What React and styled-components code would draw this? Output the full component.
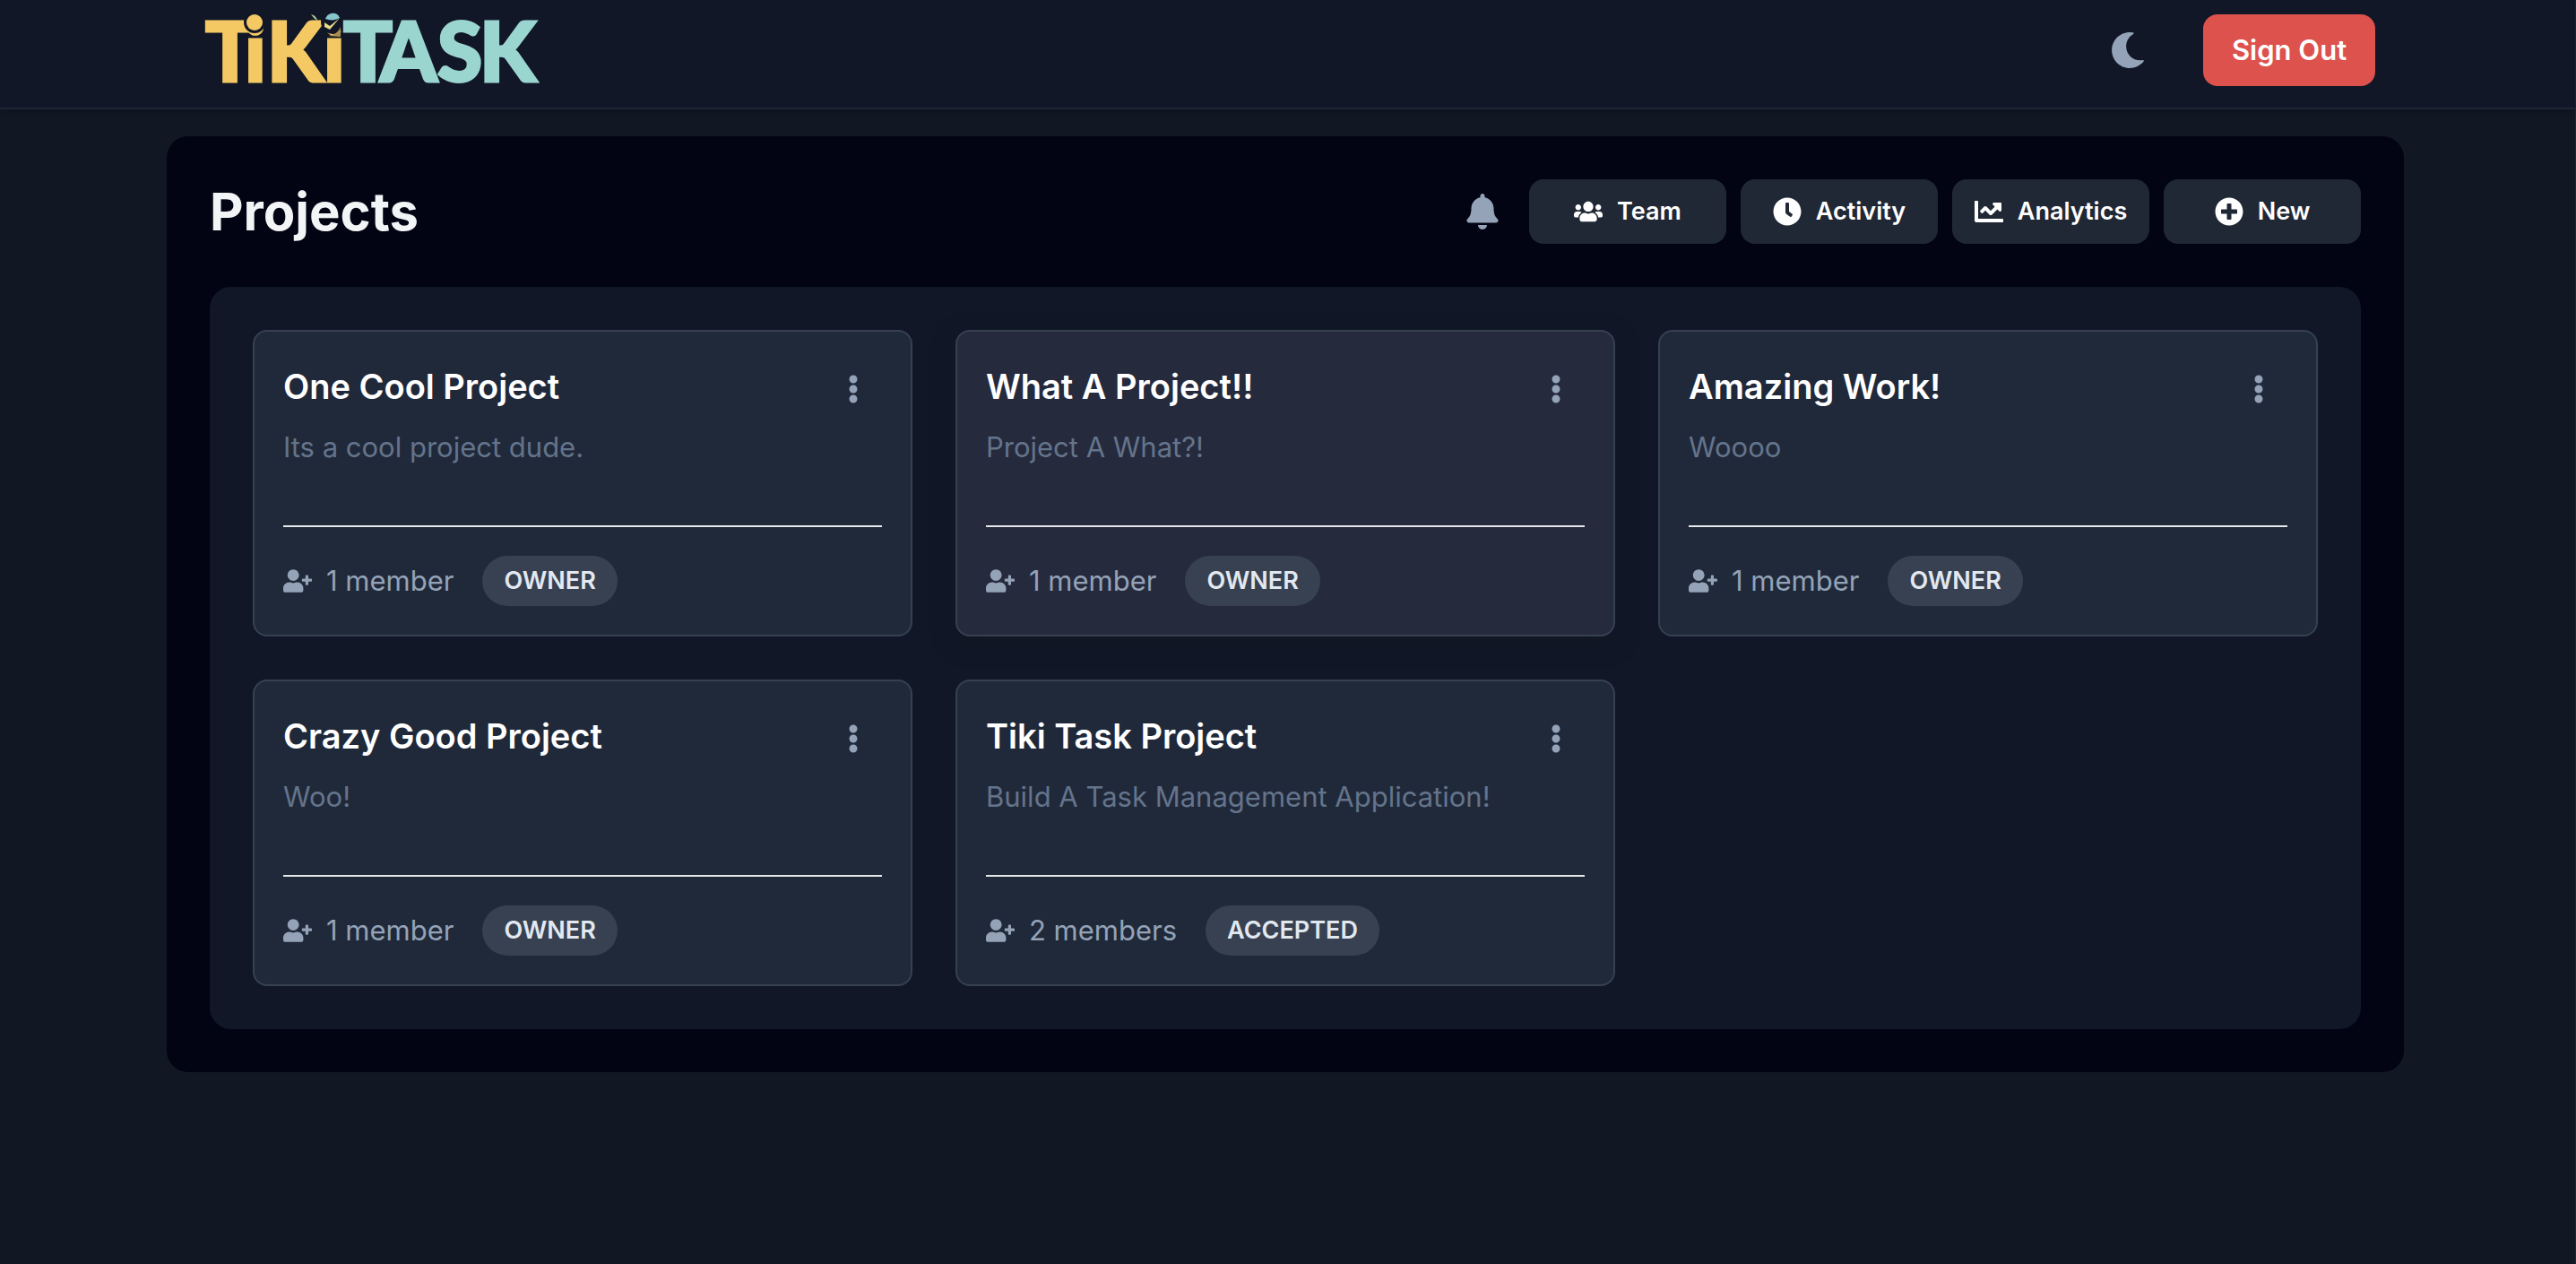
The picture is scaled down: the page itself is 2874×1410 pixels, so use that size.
import React from 'react';
import styled, { createGlobalStyle } from 'styled-components';
import {
  FaBell,
  FaChartLine,
  FaClock,
  FaEllipsisV,
  FaMoon,
  FaPlusCircle,
  FaUserPlus,
  FaUsers,
} from 'react-icons/fa';

const GlobalStyle = createGlobalStyle`
  *, *::before, *::after { box-sizing: border-box; }
  body {
    margin: 0;
    background: #111824;
    color: #ffffff;
    font-family: Inter, "Liberation Sans", sans-serif;
    font-size: 31px;
    line-height: 48px;
  }
  button { font: inherit; color: inherit; border: 0; cursor: pointer; }
  h1, h2, p, ul { margin: 0; padding: 0; }
  svg { display: block; flex-shrink: 0; }
`;

const Page = styled.div`
  min-height: 100vh;
  padding-right: 5px;
  border-right: 1px solid #1f2537;
`;

const Nav = styled.header`
  margin-right: -5px;
  padding-right: 5px;
  background: #111727;
  border-bottom: 2px solid #1f2537;
  box-shadow: 0 2px 8px rgba(0, 0, 0, 0.2);
`;

const Container = styled.div`
  max-width: 2560px;
  margin: 0 auto;
  padding: 0 ${(p) => p.$gutter}px;
`;

const NavRow = styled.div`
  display: flex;
  align-items: flex-start;
  justify-content: space-between;
`;

const LogoLink = styled.a`
  display: block;
  color: inherit;
  text-decoration: none;
`;

const NavActions = styled.div`
  display: flex;
  align-items: center;
  gap: 48px;
  padding-top: 16px;
`;

const IconButton = styled.button`
  display: flex;
  padding: 16px;
  background: none;
  color: #94a3b8;
  font-size: ${(p) => p.$size}px;
`;

const SignOutButton = styled.button`
  min-width: 192px;
  height: 80px;
  border-radius: 16px;
  background: #dd524c;
  font-weight: 600;
`;

const Main = styled.main`
  padding-top: 30px;
`;

const Panel = styled.section`
  padding: 48px;
  border-radius: 24px;
  background: #020413;
`;

const PanelHeader = styled.div`
  display: flex;
  align-items: center;
  justify-content: space-between;
  height: 72px;
  margin-bottom: 48px;
`;

const PageTitle = styled.h1`
  font-size: 58px;
  line-height: 72px;
  font-weight: 700;
  color: #f3f4f6;
`;

const Toolbar = styled.div`
  display: flex;
  align-items: center;
  gap: 16px;
`;

const ToolButton = styled.button`
  display: flex;
  align-items: center;
  justify-content: center;
  gap: 16px;
  width: 220px;
  height: 72px;
  padding: 0;
  border-radius: 16px;
  background: #202835;
  font-size: 27px;
  font-weight: 600;

  svg { font-size: 32px; }
`;

const ProjectGrid = styled.ul`
  display: grid;
  grid-template-columns: repeat(3, minmax(0, 1fr));
  gap: 48px;
  padding: 48px;
  border-radius: 24px;
  background: #111727;
  list-style: none;
`;

const Card = styled.li`
  padding: 32px;
  border: 2px solid #364150;
  border-radius: 16px;
  background: ${(p) => (p.$active ? '#262a3d' : '#20293a')};
  box-shadow: ${(p) => (p.$active ? '0 8px 24px rgba(17, 24, 32, 0.8)' : 'none')};
`;

const CardHeader = styled.div`
  display: flex;
  align-items: flex-start;
  justify-content: space-between;
`;

const CardTitle = styled.h2`
  font-size: 38px;
  line-height: 58px;
  font-weight: 600;
`;

const Description = styled.p`
  min-height: 80px;
  margin: 8px 0 32px;
  color: #64748b;
  line-height: 50px;
`;

const CardFooter = styled.div`
  display: flex;
  align-items: center;
  gap: 32px;
  padding-top: 32px;
  border-top: 2px solid #e5e7eb;
`;

const Members = styled.span`
  display: flex;
  align-items: center;
  gap: 16px;
  color: #94a3b8;

  svg { font-size: 32px; }
`;

const Badge = styled.span`
  padding: 8px 24px;
  border-radius: 28px;
  background: #374151;
  color: #e2e8f0;
  font-size: 27px;
  line-height: 40px;
  font-weight: 600;
`;

const LogoText = styled.text`
  font-family: Lato, "Liberation Sans", sans-serif;
  font-size: 91px;
  font-weight: 900;
  fill: ${(p) => p.$color};
  stroke: ${(p) => p.$color};
  stroke-width: 3px;
`;

function Logo() {
  return (
    <svg width="392" height="120" viewBox="0 0 392 120" role="img" aria-label="TikiTask">
      <LogoText y="91" x="11 55 80 143" $color="#f4c964">TiKi</LogoText>
      <circle cx="66" cy="25" r="12" fill="#111727" />
      <circle cx="66" cy="25" r="9" fill="#f4c964" />
      <circle cx="154" cy="24" r="14" fill="#111727" />
      <LogoText y="91" x="165 206 270 317" $color="#9bd5d0">TASK</LogoText>
      <path d="M145 21c3-8 14-8 16-1-5 3-11 3-16 1z" fill="#84c6cb" />
      <path d="M144 25l6 4 11-9-11 13-6-3z" fill="#e6dc8b" />
      <path d="M148 40c8-1 12-5 14-10v11z" fill="#a98f52" />
      <path d="M129 16c4 1 6 3 7 7-3-2-5-4-7-7z" fill="#a9c995" />
    </svg>
  );
}

const tools = [
  { label: 'Team', Icon: FaUsers },
  { label: 'Activity', Icon: FaClock },
  { label: 'Analytics', Icon: FaChartLine },
  { label: 'New', Icon: FaPlusCircle },
];

const projects = [
  { title: 'One Cool Project', description: 'Its a cool project dude.', members: '1 member', role: 'OWNER' },
  { title: 'What A Project!!', description: 'Project A What?!', members: '1 member', role: 'OWNER', active: true },
  { title: 'Amazing Work!', description: 'Woooo', members: '1 member', role: 'OWNER' },
  { title: 'Crazy Good Project', description: 'Woo!', members: '1 member', role: 'OWNER' },
  { title: 'Tiki Task Project', description: 'Build A Task Management Application!', members: '2 members', role: 'ACCEPTED' },
];

function ProjectCard({ project }) {
  return (
    <Card $active={project.active}>
      <CardHeader>
        <CardTitle>{project.title}</CardTitle>
        <IconButton $size={32} aria-label={`Options for ${project.title}`}>
          <FaEllipsisV />
        </IconButton>
      </CardHeader>
      <Description>{project.description}</Description>
      <CardFooter>
        <Members>
          <FaUserPlus />
          {project.members}
        </Members>
        <Badge>{project.role}</Badge>
      </CardFooter>
    </Card>
  );
}

export default function App() {
  return (
    <Page>
      <GlobalStyle />
      <Nav>
        <Container $gutter={64}>
          <NavRow>
            <LogoLink href="#"><Logo /></LogoLink>
            <NavActions>
              <IconButton $size={40} aria-label="Toggle dark mode">
                <FaMoon />
              </IconButton>
              <SignOutButton>Sign Out</SignOutButton>
            </NavActions>
          </NavRow>
        </Container>
      </Nav>
      <Main>
        <Container $gutter={32}>
          <Panel>
            <PanelHeader>
              <PageTitle>Projects</PageTitle>
              <Toolbar>
                <IconButton $size={40} aria-label="Notifications">
                  <FaBell />
                </IconButton>
                {tools.map(({ label, Icon }) => (
                  <ToolButton key={label}>
                    <Icon />
                    {label}
                  </ToolButton>
                ))}
              </Toolbar>
            </PanelHeader>
            <ProjectGrid>
              {projects.map((project) => (
                <ProjectCard key={project.title} project={project} />
              ))}
            </ProjectGrid>
          </Panel>
        </Container>
      </Main>
    </Page>
  );
}
